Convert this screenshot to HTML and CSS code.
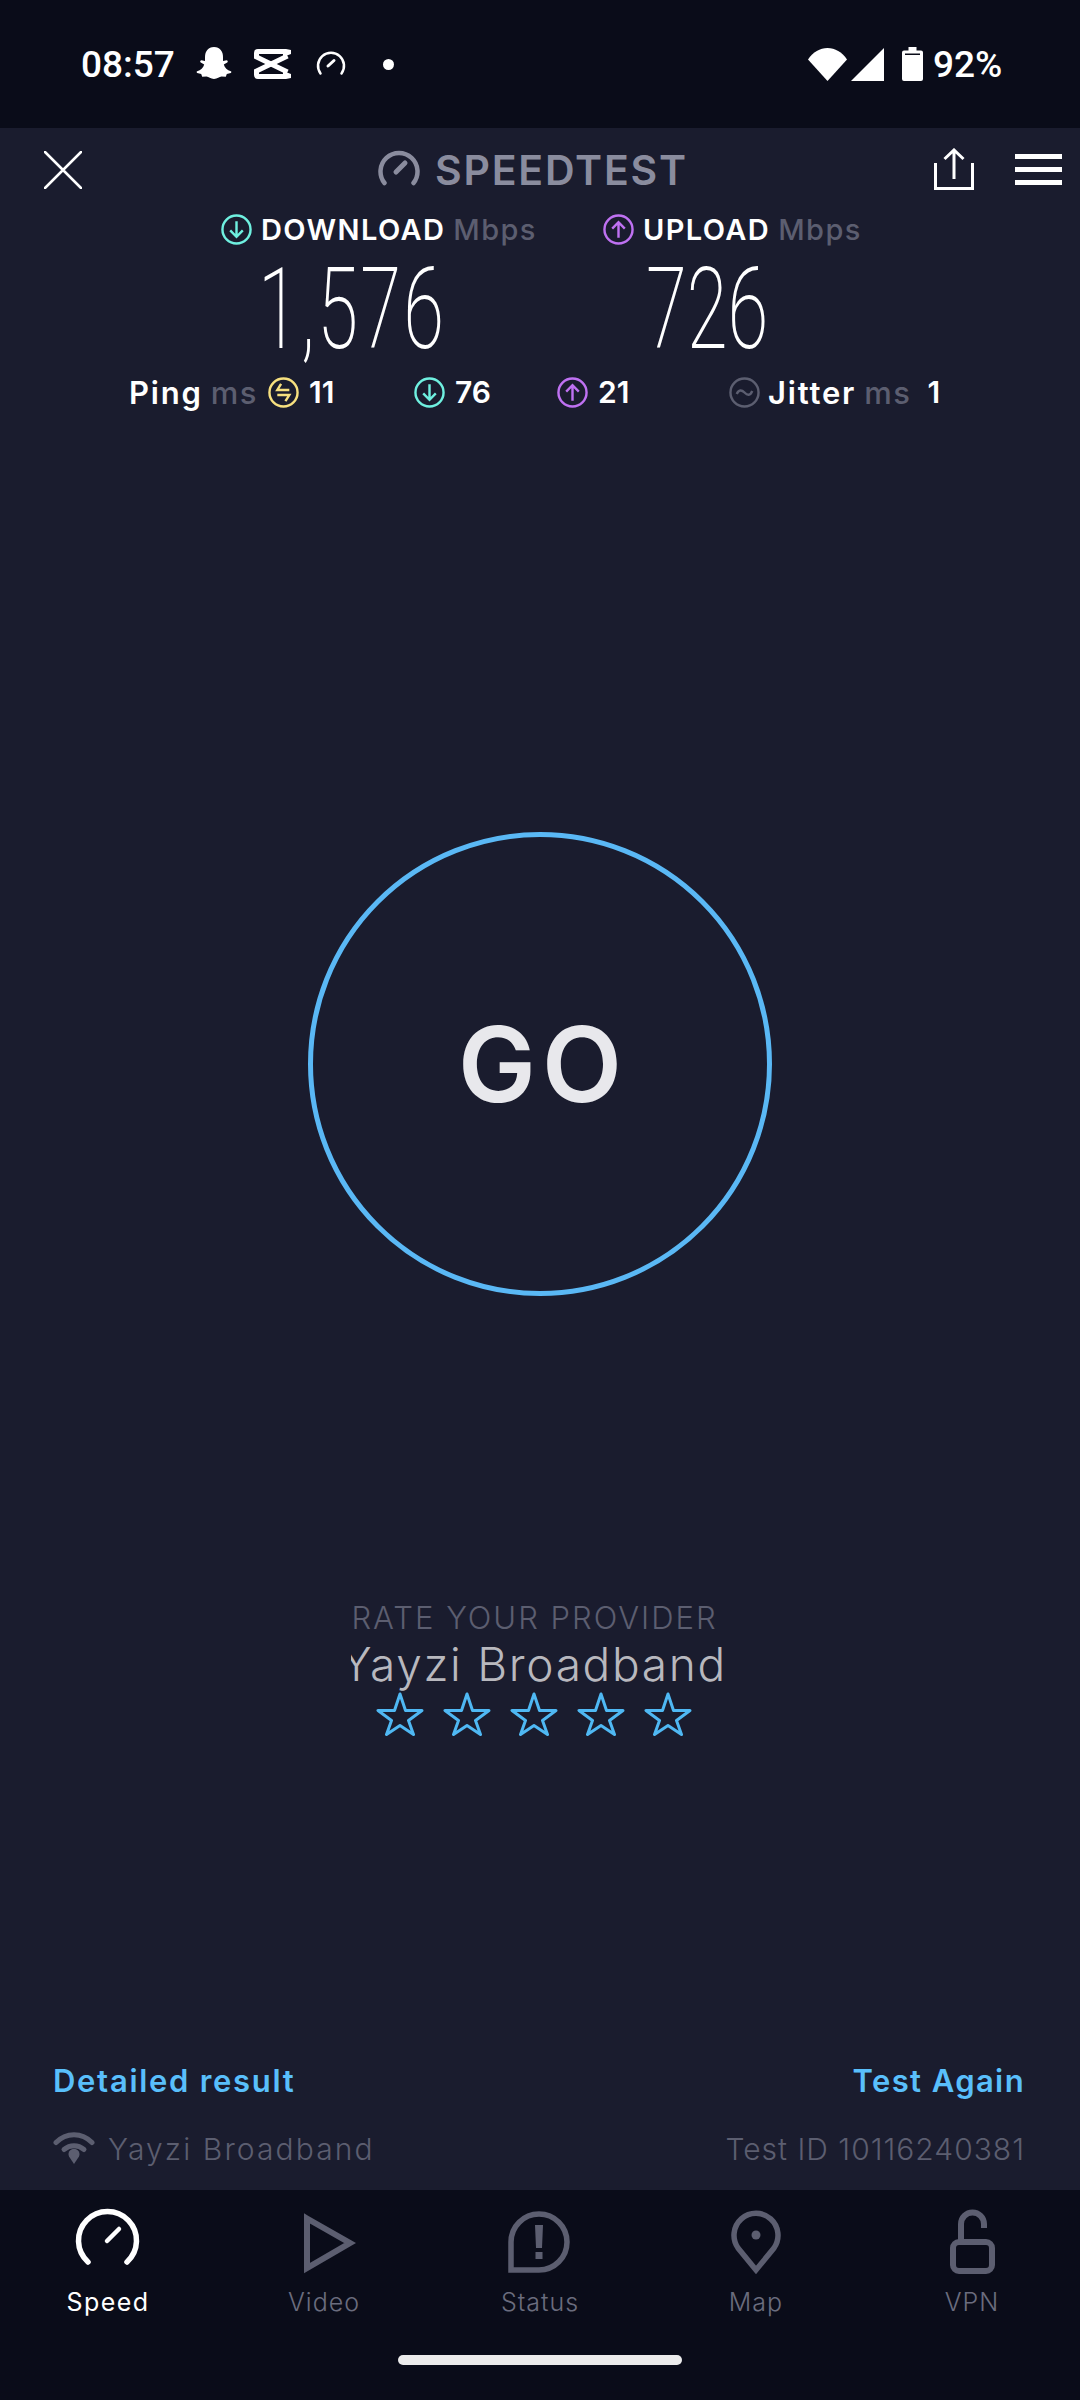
FILE: index.html
```html
<!DOCTYPE html>
<html lang="en">
<head>
<meta charset="utf-8">
<title>Speedtest</title>
<link rel="stylesheet" href="styles.css">
</head>
<body>
<div class="screen">
  <div class="status">
    <span class="time">08:57</span>
    <svg class="st-snap" viewBox="0 0 36 36"><path fill="#fff" d="M18 1c6 0 9 4.500 9 10v4l3.500-.8c1.300 0 1.800 1.600.7 2.300l-3.400 2c.8 3 3.500 5.800 7 6.800.8.300.7 1.300 0 1.600l-4 1.200-1 2.600-4.300-.2c-2.300 0-4 2.500-7.500 2.500s-5.200-2.500-7.500-2.500l-4.300.2-1-2.600-4-1.200c-.7-.3-.8-1.300 0-1.600 3.500-1 6.200-3.800 7-6.800l-3.400-2c-1.100-.7-.6-2.300.7-2.300L9 15v-4C9 5.500 12 1 18 1z"/></svg>
    <svg class="st-cap" viewBox="0 0 37 30"><g fill="none" stroke="#fff" stroke-width="5"><path d="M29 2.500H4a1.500 1.500 0 0 0-1.500 1.500V8l31 15"/><path d="M29 27.500H4a1.500 1.500 0 0 1-1.500-1.500V22l31-15"/></g><path fill="#fff" d="M29 0h3l5 1v4l-8 3zM29 30h3l5-1v-4l-8-3z"/></svg>
    <svg class="st-gauge" viewBox="0 0 30 26"><g fill="none" stroke="#fff" stroke-linecap="round"><path stroke-width="2.500" d="M4.500 23.500A13 13 0 1 1 25.500 23.500"/><path stroke-width="3" d="M12 16l6-5.500"/></g></svg>
    <span class="st-dot"></span>
    <span class="st-space"></span>
    <svg class="st-wifi" viewBox="0 0 39 33"><path fill="#fff" d="M19.500 33L0 11.500C5 4 12 0 19.500 0S34 4 39 11.500z"/></svg>
    <svg class="st-signal" viewBox="0 0 33 33"><path fill="#fff" d="M33 0v33H0z"/></svg>
    <svg class="st-batt" viewBox="0 0 21 34"><path fill="#fff" fill-rule="evenodd" d="M6.500 0h8v3.500h4.500a2 2 0 0 1 2 2V32a2 2 0 0 1-2 2H2a2 2 0 0 1-2-2V5.500a2 2 0 0 1 2-2h4.500zM3 6.500v1.500h15V6.500z"/></svg>
    <span class="batt">92%</span>
  </div>

  <main class="app">
    <header class="bar">
      <svg class="ic-close" viewBox="0 0 38 38"><path fill="none" stroke="#fff" stroke-width="2.500" stroke-linecap="round" d="M1 1l36 36M37 1L1 37"/></svg>
      <div class="brand">
        <svg class="ic-brand" viewBox="0 0 42 36"><g fill="none" stroke="#8a8c9e" stroke-linecap="round"><path stroke-width="4.500" d="M6.500 33A18.500 18.500 0 1 1 35.500 33"/><path stroke-width="5" d="M18 22l9-9"/></g></svg>
        <span class="brand-name">SPEEDTEST</span>
      </div>
      <svg class="ic-share" viewBox="0 0 40 42"><g fill="none" stroke="#fff" stroke-width="3"><path d="M1.500 15v25.500h37V15"/><path d="M20 31V2.500M10.500 11L20 2l9.500 9"/></g></svg>
      <div class="ic-menu"><i></i><i></i><i></i></div>
    </header>

    <section class="heads">
      <div class="head">
        <svg class="ic-circle" viewBox="0 0 32 32"><circle cx="16" cy="16" r="14.500" fill="none" stroke="#6ff0e0" stroke-width="2.500"/><path fill="none" stroke="#6ff0e0" stroke-width="2.500" d="M16 7.500v16M9.500 17l6.500 6.500 6.500-6.500"/></svg>
        <span class="head-label">DOWNLOAD</span><span class="unit">Mbps</span>
      </div>
      <div class="head">
        <svg class="ic-circle" viewBox="0 0 32 32"><circle cx="16" cy="16" r="14.500" fill="none" stroke="#bf71f2" stroke-width="2.500"/><path fill="none" stroke="#bf71f2" stroke-width="2.500" d="M16 24.500v-16M9.500 15L16 8.500l6.500 6.500"/></svg>
        <span class="head-label">UPLOAD</span><span class="unit">Mbps</span>
      </div>
    </section>

    <section class="nums">
      <div class="num num-wide">1,576</div>
      <div class="num">726</div>
    </section>

    <section class="stats">
      <div class="stat">
        <span class="stat-label">Ping</span><span class="unit stat-unit">ms</span>
        <svg class="ic-circle" viewBox="0 0 32 32"><circle cx="16" cy="16" r="14.500" fill="none" stroke="#f7e07f" stroke-width="2.500"/><path fill="none" stroke="#f7e07f" stroke-width="2.500" d="M22 13.400H9.600L13.500 7M9.600 18.600H22L18 25"/></svg>
        <span class="stat-val">11</span>
      </div>
      <div class="stat">
        <svg class="ic-circle" viewBox="0 0 32 32"><circle cx="16" cy="16" r="14.500" fill="none" stroke="#6ff0e0" stroke-width="2.500"/><path fill="none" stroke="#6ff0e0" stroke-width="2.500" d="M16 7.500v16M9.500 17l6.500 6.500 6.500-6.500"/></svg>
        <span class="stat-val">76</span>
      </div>
      <div class="stat">
        <svg class="ic-circle" viewBox="0 0 32 32"><circle cx="16" cy="16" r="14.500" fill="none" stroke="#bf71f2" stroke-width="2.500"/><path fill="none" stroke="#bf71f2" stroke-width="2.500" d="M16 24.500v-16M9.500 15L16 8.500l6.500 6.500"/></svg>
        <span class="stat-val">21</span>
      </div>
      <div class="stat">
        <svg class="ic-circle" viewBox="0 0 32 32"><circle cx="16" cy="16" r="14.500" fill="none" stroke="#5c5e70" stroke-width="2.500"/><path fill="none" stroke="#5c5e70" stroke-width="2.500" d="M8 17.500C10 13 13 13 16 16s6 3.500 8-1.500"/></svg>
        <span class="stat-label">Jitter</span><span class="unit stat-unit">ms</span>
        <span class="stat-val stat-last">1</span>
      </div>
    </section>

    <button class="go">GO</button>

    <section class="rate">
      <div class="rate-title">RATE YOUR PROVIDER</div>
      <div class="rate-name"><span>Yayzi Broadband</span></div>
      <div class="stars">
        <svg class="star" viewBox="0 0 48 44"><path d="M24 2l5.500 16.500H46L32.500 28.500l5 14L24 33.500l-13.500 9 5-14L2 18.500h16.500z"/></svg>
        <svg class="star" viewBox="0 0 48 44"><path d="M24 2l5.500 16.500H46L32.500 28.500l5 14L24 33.500l-13.500 9 5-14L2 18.500h16.500z"/></svg>
        <svg class="star" viewBox="0 0 48 44"><path d="M24 2l5.500 16.500H46L32.500 28.500l5 14L24 33.500l-13.500 9 5-14L2 18.500h16.500z"/></svg>
        <svg class="star" viewBox="0 0 48 44"><path d="M24 2l5.500 16.500H46L32.500 28.500l5 14L24 33.500l-13.500 9 5-14L2 18.500h16.500z"/></svg>
        <svg class="star" viewBox="0 0 48 44"><path d="M24 2l5.500 16.500H46L32.500 28.500l5 14L24 33.500l-13.500 9 5-14L2 18.500h16.500z"/></svg>
      </div>
    </section>

    <section class="foot">
      <div class="foot-row">
        <a class="link link-a">Detailed result</a>
        <a class="link link-b">Test Again</a>
      </div>
      <div class="foot-row foot-info">
        <span class="isp">
          <svg class="ic-isp" viewBox="0 0 42 33"><g fill="none" stroke="#5c5e70" stroke-width="5" stroke-linecap="round"><path d="M3 11.500C13 1 29 1 39 11.500"/><path d="M11 18.500c6-5 14-5 20 0"/></g><path fill="#5c5e70" d="M21 33l-5-7.500a5.500 5.500 0 1 1 10 0z"/></svg>
          <span class="isp-name">Yayzi Broadband</span>
        </span>
        <span class="test-id">Test ID 10116240381</span>
      </div>
    </section>
  </main>

  <nav class="nav">
    <div class="tabs">
      <div class="tab tab-on">
        <svg class="tab-ic" viewBox="0 0 70 70"><g fill="none" stroke="#fff" stroke-linecap="round"><path stroke-width="5.500" d="M15 57A29 29 0 1 1 54 57"/><path stroke-width="4.500" d="M34 36l12-12"/></g></svg>
        <span>Speed</span>
      </div>
      <div class="tab">
        <svg class="tab-ic" viewBox="0 0 70 70"><path fill="none" stroke="#5c5e70" stroke-width="6" d="M18 13.500L61 38 18 63z"/></svg>
        <span>Video</span>
      </div>
      <div class="tab">
        <svg class="tab-ic" viewBox="0 0 70 70"><path fill="none" stroke="#5c5e70" stroke-width="5.500" d="M6 65V37A28 28 0 1 1 34 65z"/><path fill="#5c5e70" d="M30 20h8l-1 23h-6zM30.500 47h7v7h-7z"/></svg>
        <span>Status</span>
      </div>
      <div class="tab">
        <svg class="tab-ic" viewBox="0 0 70 70"><path fill="none" stroke="#5c5e70" stroke-width="5.500" d="M35 65L17 43A22 22 0 1 1 53 43z"/><circle cx="35" cy="30" r="4.500" fill="#5c5e70"/></svg>
        <span>Map</span>
      </div>
      <div class="tab">
        <svg class="tab-ic" viewBox="0 0 70 70"><g fill="none" stroke="#5c5e70" stroke-width="6"><rect x="16" y="37" width="39" height="29" rx="6"/><path d="M24 35V19A11.500 11.500 0 0 1 47 19V23"/></g></svg>
        <span>VPN</span>
      </div>
    </div>
    <div class="home"></div>
  </nav>
</div>
</body>
</html>
```

FILE: styles.css
```css
* { box-sizing: border-box; }
html, body { margin: 0; padding: 0; }
body { background: #1a1c2e; font-family: "Inter", "Noto Sans", sans-serif; color: #fff; }
.screen { width: 1080px; height: 2400px; display: flex; flex-direction: column; overflow: hidden; }

.status { height: 128px; flex: none; background: #0a0c19; display: flex; align-items: center; padding: 0 76px 0 81px; }
.time, .batt { font-family: "Roboto", sans-serif; font-size: 37px; font-weight: 500; color: #fff; }
.time { width: 95px; }
.batt { margin-left: 10px; width: 71px; white-space: nowrap; }
.st-snap { width: 36px; height: 36px; margin-left: 20px; }
.st-cap { width: 37px; height: 30px; margin-left: 22px; }
.st-gauge { width: 30px; height: 26px; margin-left: 25px; margin-top: -2px; }
.st-dot { width: 11px; height: 11px; border-radius: 50%; background: #fff; margin-left: 37px; }
.st-space { flex: 1; }
.st-wifi { width: 39px; height: 33px; }
.st-signal { width: 33px; height: 33px; margin-left: 4px; }
.st-batt { width: 21px; height: 34px; margin-left: 18px; }

.app { flex: 1; display: flex; flex-direction: column; min-height: 0; }
.bar { height: 84px; flex: none; display: flex; align-items: center; padding: 0 18px 0 44px; }
.ic-close { width: 38px; height: 38px; }
.brand { display: flex; align-items: center; margin-left: 296px; width: 556px; }
.ic-brand { width: 42px; height: 36px; margin-top: -4px; }
.brand-name { font-size: 41px; font-weight: 600; color: #8a8c9e; margin-left: 15px; letter-spacing: 1.8px; }
.ic-share { width: 40px; height: 42px; margin-top: -2px; }
.ic-menu { width: 47px; margin-left: 41px; display: flex; flex-direction: column; gap: 8px; margin-top: -2px; }
.ic-menu i { display: block; height: 5px; background: #fff; }

.heads { display: grid; grid-template-columns: 382px 1fr; padding-left: 221px; margin-top: 1px; }
.head { display: flex; align-items: center; height: 32px; }
.ic-circle { width: 31px; height: 31px; flex: none; }
.head-label { font-size: 29px; font-weight: 600; margin-left: 9px; letter-spacing: 1.4px; }
.unit { color: #5c5e70; font-size: 29px; font-weight: 500; margin-left: 8px; letter-spacing: 1.4px; }

.nums { display: grid; grid-template-columns: 388px 1fr; padding-left: 258px; margin-top: 7px; }
.num { font-family: "Roboto", sans-serif; font-weight: 200; font-size: 114px; line-height: 114px; color: #fff; transform: scaleX(0.65); transform-origin: left center; white-space: nowrap; }
.num-wide { letter-spacing: 3.4px; }

.stats { display: grid; grid-template-columns: 285px 143px 172px 1fr; padding-left: 129px; margin-top: 10px; }
.stat { display: flex; align-items: center; height: 32px; }
.stat-label { font-size: 31px; font-weight: 600; letter-spacing: 1.8px; }
.stat-label + .stat-unit { margin-left: 8px; }
.stat-unit { font-size: 31px; letter-spacing: 1.6px; }
.stat svg + .stat-label { margin-left: 8px; }
.stat-unit + .ic-circle { margin-left: 10px; }
.stat-val { font-size: 30px; font-weight: 600; margin-left: 10px; }
.stat-last { margin-left: 16px; }

.go { width: 464px; height: 464px; flex: none; margin: 424px auto 0; padding: 0 0 0 6px; border: 5px solid #5ab8f5; border-radius: 50%; background: transparent; color: #e8e8ec; font-family: inherit; font-size: 104px; font-weight: 600; letter-spacing: 6px; }

.rate { display: flex; flex-direction: column; align-items: center; margin-top: 304px; }
.rate-title { font-size: 31px; font-weight: 300; color: #5c5e70; line-height: 36px; margin-left: -11px; letter-spacing: 2px; white-space: nowrap; }
.rate-name { width: 376px; height: 58px; overflow: hidden; color: #b8b8be; font-size: 46px; font-weight: 300; line-height: 56px; margin-left: -2px; display: flex; justify-content: flex-end; white-space: nowrap; letter-spacing: 1.7px; }
.rate-name span { flex: none; }
.stars { display: flex; gap: 19px; margin-left: -12px; margin-top: -2px; }
.star { width: 48px; height: 44px; }
.star path { fill: none; stroke: #4fb8f3; stroke-width: 3; stroke-linejoin: round; }

.foot { margin-top: auto; padding: 0 55px 0 53px; }
.foot-row { display: flex; justify-content: space-between; align-items: center; }
.link { font-size: 31px; font-weight: 600; color: #59bffb; }
.link-a { letter-spacing: 1.7px; }
.link-b { letter-spacing: 1.4px; }
.foot-info { font-size: 30px; font-weight: 300; color: #5c5e70; margin-top: 28px; height: 44px; margin-bottom: 19px; }
.isp { display: flex; align-items: center; gap: 13px; }
.isp-name { letter-spacing: 2.1px; }
.test-id { letter-spacing: 1px; }
.ic-isp { width: 42px; height: 33px; margin-top: -4px; }

.nav { height: 210px; flex: none; background: #0a0c19; display: flex; flex-direction: column; align-items: center; }
.tabs { display: grid; grid-template-columns: repeat(5, 216px); padding-top: 15px; }
.tab { display: flex; flex-direction: column; align-items: center; font-size: 25px; font-weight: 300; color: #6a6c7e; letter-spacing: 1px; }
.tab-on { color: #fff; font-weight: 400; letter-spacing: 1.4px; }
.tab-ic { width: 70px; height: 70px; margin-bottom: 12px; }
.home { width: 284px; height: 10px; background: #ececec; border-radius: 5px; margin-top: 38px; }
```
